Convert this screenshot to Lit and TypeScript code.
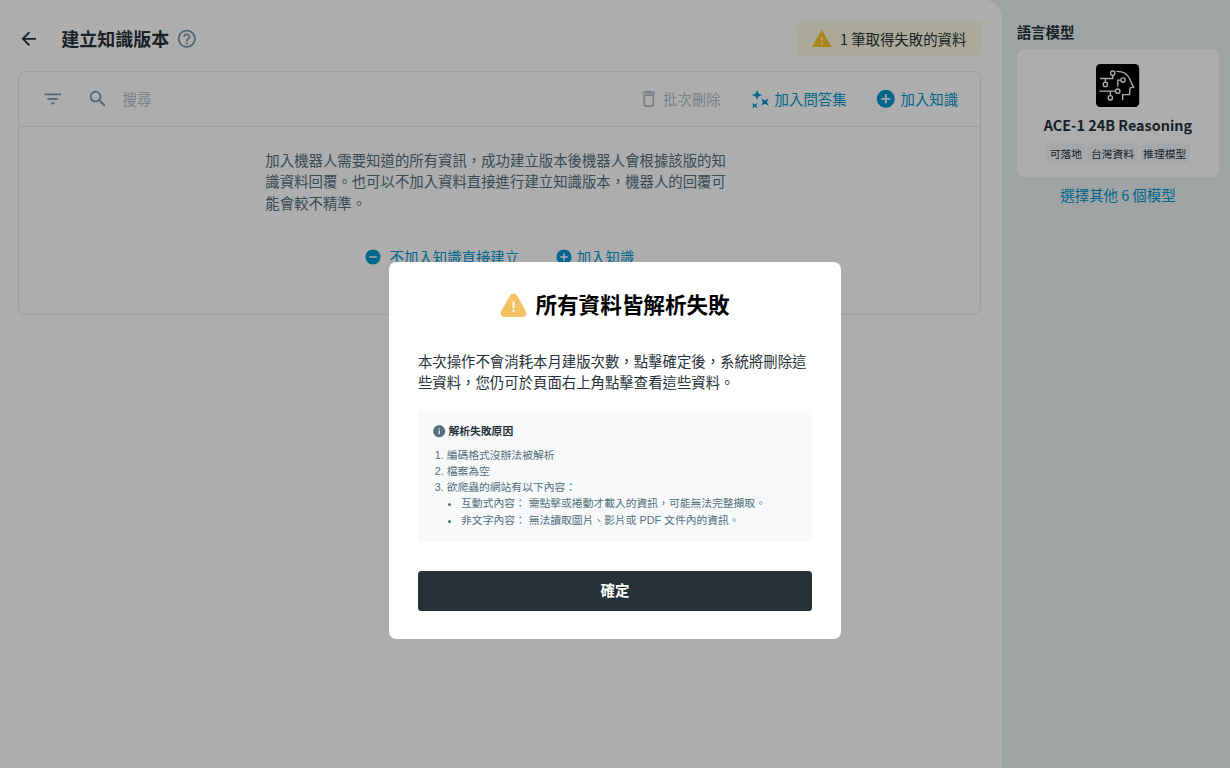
import { LitElement, html, css, svg } from "lit";
import { customElement, property } from "lit/decorators.js";

const icons: Record<string, { box: string; body: unknown }> = {
  back: { box: "0 0 24 24", body: svg`<path d="M20 11H7.83l5.59-5.59L12 4l-8 8 8 8 1.41-1.41L7.83 13H20v-2z"/>` },
  help: {
    box: "0 0 24 24",
    body: svg`<path d="M11 18h2v-2h-2v2zm1-16C6.48 2 2 6.48 2 12s4.48 10 10 10 10-4.48 10-10S17.52 2 12 2zm0 18c-4.41 0-8-3.59-8-8s3.59-8 8-8 8 3.59 8 8-3.59 8-8 8zm0-14c-2.21 0-4 1.79-4 4h2c0-1.1.9-2 2-2s2 .9 2 2c0 2-3 1.75-3 5h2c0-2.25 3-2.5 3-5 0-2.21-1.79-4-4-4z"/>`,
  },
  warning: { box: "0 0 24 24", body: svg`<path d="M1 21h22L12 2 1 21zm12-3h-2v-2h2v2zm0-4h-2v-4h2v4z"/>` },
  filter: { box: "0 0 24 24", body: svg`<path d="M10 18h4v-2h-4v2zM3 6v2h18V6H3zm3 7h12v-2H6v2z"/>` },
  search: {
    box: "0 0 24 24",
    body: svg`<path d="M15.5 14h-.79l-.28-.27A6.47 6.47 0 0 0 16 9.5 6.5 6.5 0 1 0 9.5 16c1.61 0 3.09-.59 4.23-1.57l.27.28v.79l5 4.99L20.49 19l-4.99-5zm-6 0C7.01 14 5 11.99 5 9.5S7.01 5 9.5 5 14 7.01 14 9.5 11.99 14 9.5 14z"/>`,
  },
  trash: {
    box: "0 0 24 24",
    body: svg`<path d="M6 19c0 1.1.9 2 2 2h8c1.1 0 2-.9 2-2V7H6v12zM8 9h8v10H8V9zm7.5-5l-1-1h-5l-1 1H5v2h14V4h-3.5z"/>`,
  },
  sparkle: {
    box: "0 0 24 24",
    body: svg`<path d="M9 1.600c.8 4.200 1.900 5.300 6.400 6.100-4.500.8-5.600 1.900-6.400 6.100-.8-4.200-1.900-5.300-6.400-6.100 4.500-.8 5.600-1.900 6.400-6.100z"/>
      <path d="M13.400 11.500l4.300 2.300 4.300-2.300-2.100 4.100 2.100 4.100-4.300-2.200-4.300 2.200 2.100-4.100z"/>
      <path d="M3.400 16.600l3 1.600 3-1.600-1.400 2.900 1.400 2.900-3-1.500-3 1.500 1.400-2.900z"/>`,
  },
  plus: {
    box: "0 0 24 24",
    body: svg`<path d="M12 2C6.480 2 2 6.480 2 12s4.480 10 10 10 10-4.480 10-10S17.520 2 12 2zm5 11h-4v4h-2v-4H7v-2h4V7h2v4h4v2z"/>`,
  },
  minus: {
    box: "0 0 24 24",
    body: svg`<path d="M12 2C6.480 2 2 6.480 2 12s4.480 10 10 10 10-4.480 10-10S17.520 2 12 2zm5 11H7v-2h10v2z"/>`,
  },
  info: {
    box: "0 0 24 24",
    body: svg`<path d="M12 2C6.480 2 2 6.480 2 12s4.480 10 10 10 10-4.480 10-10S17.520 2 12 2zm1 15h-2v-6h2v6zm0-8h-2V7h2v2z"/>`,
  },
  alert: {
    box: "0 0 30 27",
    body: svg`<path d="M11 3c1.800-3.200 6.200-3.200 8 0l9.800 17.400c1.600 2.900-.3 6.300-3.600 6.300H4.800c-3.300 0-5.200-3.400-3.600-6.300z"/>
      <path d="M15 10v6" stroke="#fff" stroke-width="2" stroke-linecap="round"/><circle cx="15" cy="19.800" r="1.200" fill="#fff"/>`,
  },
  head: {
    box: "0 0 48 48",
    body: svg`<rect width="48" height="48" rx="5" fill="#000"/>
      <g fill="none" stroke="#fff" stroke-width="1.500">
        <circle cx="18.600" cy="10.200" r="2.400"/><path d="M18.600 12.600v3.500H4.500M10.400 16.100v4.200"/><circle cx="10.400" cy="22.700" r="2.400"/>
        <path d="M3.700 30.200h18M16 30.200v5"/><circle cx="24.200" cy="30.200" r="2.400"/><circle cx="16" cy="37.600" r="2.400"/>
        <circle cx="30" cy="17.900" r="2.400"/><path d="M27.600 17.900h-3.400v7"/>
        <path d="M22.700 8.200c7-.3 11.800 2.800 14.300 7.600 1.500 3 2.500 6.400 5 9.900l-4.100.9-.7 7.500h-7.600v6.300"/>
      </g>`,
  },
};

@customElement("ui-icon")
class UiIcon extends LitElement {
  @property() name = "";
  static styles = css`
    :host { display: inline-flex; flex: none; width: 24px; height: 24px; }
    .glyph { width: 100%; height: 100%; fill: currentColor; }
  `;
  render() {
    const icon = icons[this.name];
    return html`<svg class="glyph" viewBox=${icon.box} aria-hidden="true">${icon.body}</svg>`;
  }
}

@customElement("app-root")
class AppRoot extends LitElement {
  static styles = css`
    :host {
      display: grid;
      min-height: 100vh;
      font-family: "Noto Sans CJK TC", sans-serif;
      font-size: 16px;
      line-height: 24px;
      color: #263238;
    }
    *, *::before, *::after { box-sizing: border-box; }
    h1, h2, h3, p, ol, ul { margin: 0; }
    button, input { font: inherit; color: inherit; background: none; border: 0; padding: 0; }
    .page {
      zoom: 0.9;
      display: grid;
      grid-template-columns: minmax(0, 1fr) 253px;
      background: #eaf1f2;
    }
    .main {
      display: flex;
      flex-direction: column;
      gap: 16px;
      padding: 23px 24px 24px 20px;
      background: #fff;
      border-radius: 0 20px 0 0;
    }
    .header { display: flex; align-items: center; height: 40px; }
    .back { display: flex; margin-right: 24px; }
    .title { font-size: 20px; line-height: 28px; font-weight: 700; }
    .help { display: flex; margin-left: 8px; color: #7897a3; }
    .notice {
      display: flex;
      align-items: center;
      gap: 8px;
      height: 40px;
      margin-left: auto;
      padding: 0 16px;
      border-radius: 4px;
      background: #fdf9e2;
    }
    .notice ui-icon { color: #fcc728; }
    .card { border: 1px solid #e4e9ec; border-radius: 8px; }
    .toolbar {
      display: flex;
      align-items: center;
      gap: 32px;
      height: 61px;
      padding: 0 24px 0 25px;
      border-bottom: 1px solid #e4e9ec;
    }
    .filter { display: flex; color: #7897a3; margin-right: -6px; }
    .search { display: flex; flex: 1; align-items: center; gap: 16px; color: #7897a3; }
    .field { flex: 1; min-width: 0; outline: none; }
    .field::placeholder { color: #b0bec5; opacity: 1; }
    .action { display: inline-flex; align-items: center; gap: 4px; color: #0097cf; white-space: nowrap; }
    .action:disabled { color: #b0bec5; }
    .empty {
      display: flex;
      flex-direction: column;
      align-items: center;
      gap: 28px;
      padding: 24px 24px 44px;
    }
    .hint { width: 100%; max-width: 520px; color: #546e7a; }
    .choices { display: flex; gap: 40px; height: 40px; }
    .choices ui-icon { width: 20px; height: 20px; }
    .skip { gap: 8px; }
    .side { display: flex; flex-direction: column; padding: 23px 12px 24px 16px; }
    .side-title { font-size: 16px; line-height: 24px; font-weight: 700; margin-bottom: 7px; }
    .model {
      display: flex;
      flex-direction: column;
      align-items: center;
      gap: 8px;
      padding: 17px 16px 16px;
      border-radius: 8px;
      background: #fff;
    }
    .model ui-icon { width: 48px; height: 48px; }
    .model-name { font-size: 16px; line-height: 24px; font-weight: 700; }
    .tags { display: flex; gap: 2px; padding: 0; list-style: none; }
    .tag { padding: 2px 4px; border-radius: 4px; background: #f5f7fa; font-size: 12px; line-height: 18px; }
    .more { align-self: center; margin-top: 7px; color: #0097cf; text-decoration: none; }
    .overlay {
      position: fixed;
      inset: 0;
      display: flex;
      align-items: center;
      justify-content: center;
      padding-top: 133px;
      background: rgba(0, 0, 0, 0.32);
    }
    .modal {
      zoom: 0.9;
      display: flex;
      flex-direction: column;
      width: 502px;
      max-width: 100%;
      padding: 32px;
      border-radius: 8px;
      background: #fff;
    }
    .modal-title {
      display: flex;
      align-items: center;
      justify-content: center;
      gap: 9px;
      margin-bottom: 34px;
      color: #000;
      font-size: 24px;
      line-height: 32px;
      font-weight: 700;
    }
    .modal-title ui-icon { width: 30px; height: 27px; color: #f4c264; }
    .reasons {
      margin: 18px 0 32px;
      padding: 16px;
      border-radius: 4px;
      background: #f7f9fb;
      color: #546e7a;
      font-family: "Liberation Sans", "Noto Sans CJK TC", sans-serif;
      font-size: 12px;
      line-height: 18px;
    }
    .reasons-title {
      display: flex;
      align-items: center;
      gap: 2px;
      margin-bottom: 8px;
      color: #263238;
      font-size: 12px;
      line-height: 18px;
      font-weight: 700;
    }
    .reasons-title ui-icon { width: 16px; height: 16px; color: #546e7a; }
    .list { padding-left: 16px; }
    .bullets { list-style: disc; }
    .confirm { height: 44px; padding-bottom: 3px; border-radius: 4px; background: #263238; color: #fff; font-weight: 700; }
  `;

  render() {
    return html`
      <div class="page">
        <main class="main">
          <header class="header">
            <button class="back" aria-label="返回"><ui-icon name="back"></ui-icon></button>
            <h1 class="title">建立知識版本</h1>
            <button class="help" aria-label="說明"><ui-icon name="help"></ui-icon></button>
            <button class="notice"><ui-icon name="warning"></ui-icon>1 筆取得失敗的資料</button>
          </header>
          <section class="card">
            <div class="toolbar">
              <button class="filter" aria-label="篩選"><ui-icon name="filter"></ui-icon></button>
              <label class="search">
                <ui-icon name="search"></ui-icon>
                <input class="field" type="text" placeholder="搜尋" aria-label="搜尋" />
              </label>
              <button class="action" disabled><ui-icon name="trash"></ui-icon>批次刪除</button>
              <button class="action"><ui-icon name="sparkle"></ui-icon>加入問答集</button>
              <button class="action"><ui-icon name="plus"></ui-icon>加入知識</button>
            </div>
            <div class="empty">
              <p class="hint">加入機器人需要知道的所有資訊，成功建立版本後機器人會根據該版的知識資料回覆。也可以不加入資料直接進行建立知識版本，機器人的回覆可能會較不精準。</p>
              <div class="choices">
                <button class="action skip"><ui-icon name="minus"></ui-icon>不加入知識直接建立</button>
                <button class="action"><ui-icon name="plus"></ui-icon>加入知識</button>
              </div>
            </div>
          </section>
        </main>
        <aside class="side">
          <h2 class="side-title">語言模型</h2>
          <div class="model">
            <ui-icon name="head"></ui-icon>
            <h3 class="model-name">ACE-1 24B Reasoning</h3>
            <ul class="tags">
              ${["可落地", "台灣資料", "推理模型"].map((tag) => html`<li class="tag">${tag}</li>`)}
            </ul>
          </div>
          <a class="more" href="#models">選擇其他 6 個模型</a>
        </aside>
      </div>
      <div class="overlay">
        <section class="modal" role="dialog" aria-modal="true" aria-labelledby="modal-title">
          <h2 class="modal-title" id="modal-title"><ui-icon name="alert"></ui-icon>所有資料皆解析失敗</h2>
          <p>本次操作不會消耗本月建版次數，點擊確定後，系統將刪除這些資料，您仍可於頁面右上角點擊查看這些資料。</p>
          <div class="reasons">
            <h3 class="reasons-title"><ui-icon name="info"></ui-icon>解析失敗原因</h3>
            <ol class="list">
              <li>編碼格式沒辦法被解析</li>
              <li>檔案為空</li>
              <li>
                欲爬蟲的網站有以下內容：
                <ul class="list bullets">
                  <li>互動式內容： 需點擊或捲動才載入的資訊，可能無法完整擷取。</li>
                  <li>非文字內容： 無法讀取圖片、影片或 PDF 文件內的資訊。</li>
                </ul>
              </li>
            </ol>
          </div>
          <button class="confirm">確定</button>
        </section>
      </div>
    `;
  }
}
